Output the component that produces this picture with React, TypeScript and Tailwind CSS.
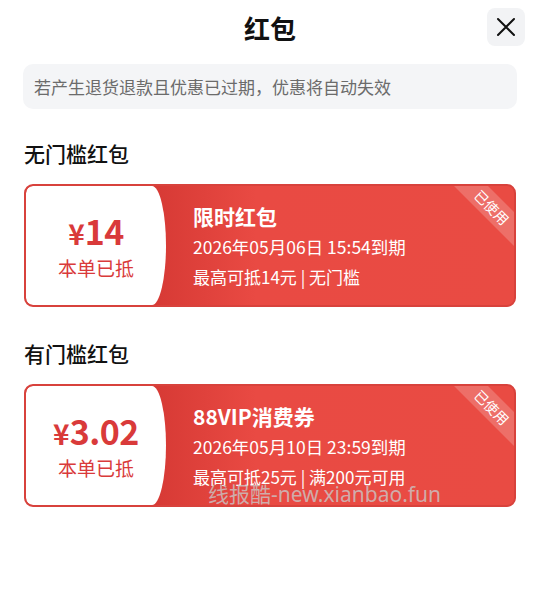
import React from "react";

type Coupon = {
  symbol: string;
  amount: string;
  title: string;
  date: string;
  limit: string;
};

function CouponCard({ c }: { c: Coupon }) {
  return (
    <div className="relative mx-[24px] h-[123px] rounded-[9px] border-2 border-[#d8423c] bg-[linear-gradient(90deg,#d73a35_130px,#e94a43_230px,#e94b43_100%)] overflow-hidden flex">
      <div className="w-[140px] h-full bg-white rounded-l-[7px] rounded-r-[14px_50%] flex flex-col items-center justify-center text-[#d93a3a]">
        <div className="flex items-baseline font-semibold leading-none">
          <span className="text-[28px]">{c.symbol}</span>
          <span className="text-[34px] tracking-[-0.5px]">{c.amount}</span>
        </div>
        <div className="mt-[10px] text-[19px] leading-none">本单已抵</div>
      </div>
      <div className="pl-[27px] pt-[17px] text-white flex flex-col">
        <div className="text-[21px] font-semibold leading-[26px]">{c.title}</div>
        <div className="mt-[6px] text-[17.5px] leading-[24px]">{c.date}</div>
        <div className="mt-[6px] text-[17px] leading-[24px]">{c.limit}</div>
      </div>
      <div className="absolute left-[406px] top-[9px] w-[120px] h-[24px] rotate-45 bg-white/20 flex items-center justify-center text-white text-[14px] leading-none">
        已使用
      </div>
    </div>
  );
}

export default function App() {
  const c1: Coupon = {
    symbol: "¥",
    amount: "14",
    title: "限时红包",
    date: "2026年05月06日 15:54到期",
    limit: "最高可抵14元 | 无门槛",
  };
  const c2: Coupon = {
    symbol: "¥",
    amount: "3.02",
    title: "88VIP消费券",
    date: "2026年05月10日 23:59到期",
    limit: "最高可抵25元 | 满200元可用",
  };
  return (
    <div className="relative w-[540px] h-[598px] bg-white font-['Noto_Sans_CJK_SC','Noto_Sans',sans-serif] text-[#111]">
      <div className="relative h-[56px] flex items-center justify-center">
        <div className="text-[26px] font-bold leading-none">红包</div>
        <button className="absolute right-[15px] top-[8px] w-[38px] h-[38px] rounded-[8px] bg-[#f2f3f5] flex items-center justify-center">
          <svg width="22" height="22" viewBox="0 0 22 22" fill="none" stroke="#111" strokeWidth="2" strokeLinecap="round">
            <path d="M3 3L19 19M19 3L3 19" />
          </svg>
        </button>
      </div>
      <div className="mx-[23px] mt-[8px] h-[45px] rounded-[10px] bg-[#f4f5f7] flex items-center px-[11px] text-[17px] text-[#6b6b6b]">
        若产生退货退款且优惠已过期，优惠将自动失效
      </div>
      <div className="mt-[31px] mb-[16px] px-[24px] h-[28px] flex items-center text-[21px] font-medium">无门槛红包</div>
      <CouponCard c={c1} />
      <div className="mt-[33px] mb-[16px] px-[24px] h-[28px] flex items-center text-[21px] font-medium">有门槛红包</div>
      <CouponCard c={c2} />
      <div className="absolute left-[208px] top-[481px] text-[21px] leading-[26px] text-[rgba(200,200,200,0.78)] font-['Noto_Sans','Noto_Sans_CJK_SC',sans-serif]">
        线报酷-new.xianbao.fun
      </div>
    </div>
  );
}
